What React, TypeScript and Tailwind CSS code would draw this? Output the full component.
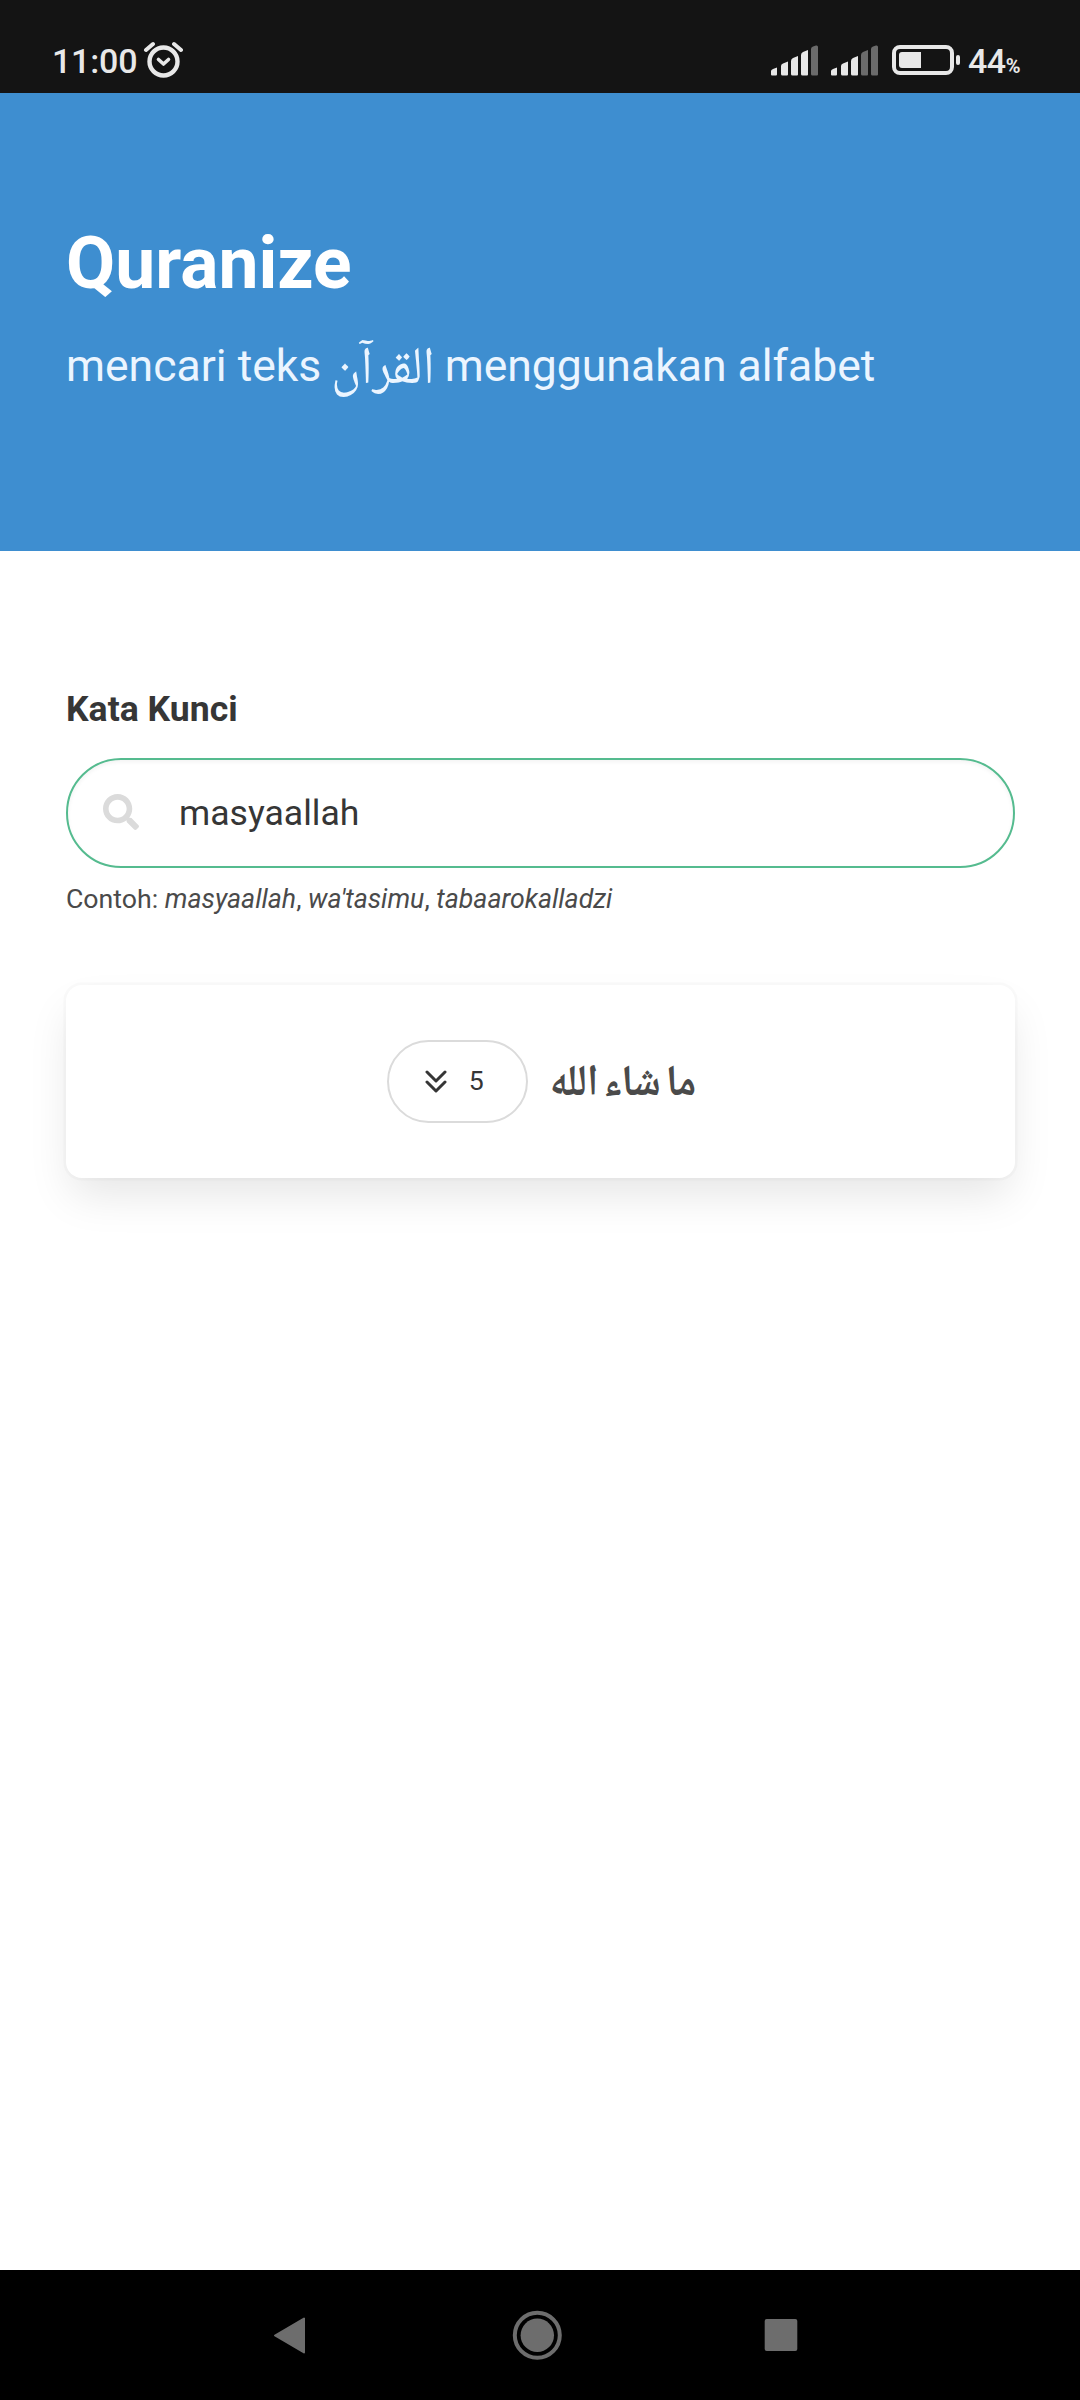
import React from "react";

const SIGNAL_BARS = [
  "M1 30.500 V26 Q1 25 3 24 L7 22.500 V29.500 Q7 30.500 6 30.500 H2 Q1 30.500 1 29.500Z",
  "M11 30 V21 Q11 19 13 18.500 L18 16.500 V29.500 Q18 30.500 17 30.500 H12.500 Q11 30.500 11 29Z",
  "M21 29 V16 Q21 14 23 13 L28 11 V29.500 Q28 30.500 27 30.500 H22.500 Q21 30.500 21 29Z",
  "M31 29 V10 Q31 8 33 7 L38 5 V29.500 Q38 30.500 37 30.500 H32.500 Q31 30.500 31 29Z",
  "M41 29 V4 Q41 2 43 1.500 L46 0.500 Q48 0 48 2 V29.500 Q48 30.500 47 30.500 H42.500 Q41 30.500 41 29Z",
];

function Signal({ level }: { level: number }) {
  return (
    <svg className="block h-[31px] w-[48px] shrink-0" viewBox="0 0 48 31">
      {SIGNAL_BARS.map((d, i) => (
        <path key={d} d={d} fill={i < level ? "#e8e8e8" : "#6b6b6b"} />
      ))}
    </svg>
  );
}

function StatusBar() {
  return (
    <div className="flex h-[93px] items-start bg-[#141414] text-[#e8e8e8]">
      <span className="mt-[41px] ml-[52px] w-[91px] text-[34px] leading-[40px] font-medium tracking-[-0.2px] whitespace-nowrap">11:00</span>
      <svg className="mt-[41px] block h-[38px] w-[40px] shrink-0" viewBox="0 0 40 38" fill="none" stroke="#e8e8e8" strokeLinecap="round" strokeLinejoin="round">
        <circle cx="20.500" cy="20.500" r="14" strokeWidth="4.400" />
        <path d="M15.500 18.500 L20.500 23 L25.500 18.500" strokeWidth="3.600" />
        <path d="M3 9 L10 3 M38 9 L31 3" strokeWidth="4" />
      </svg>
      <div className="mt-[45px] ml-auto flex gap-[12px]">
        <Signal level={4} />
        <Signal level={3} />
      </div>
      <svg className="mt-[45px] ml-[14px] block h-[31px] w-[69px] shrink-0" viewBox="0 0 69 31">
        <rect x="2" y="2" width="58" height="26" rx="6" fill="none" stroke="#e8e8e8" strokeWidth="4" />
        <path d="M10 7 H29 V23 H10 Q7 23 7 20 V10 Q7 7 10 7Z" fill="#e8e8e8" />
        <rect x="64" y="10" width="4" height="10" rx="2" fill="#e8e8e8" />
      </svg>
      <div className="mt-[41px] mr-[58px] ml-[7px] flex w-[54px] items-baseline font-medium">
        <span className="text-[34px] leading-[40px] tracking-[-0.5px]">44</span>
        <span className="text-[20px] leading-[40px] font-bold">%</span>
      </div>
    </div>
  );
}

export default function App() {
  return (
    <div className="flex h-[2400px] w-[1080px] flex-col overflow-hidden bg-white font-['Roboto','Noto_Naskh_Arabic',sans-serif] text-[#4a4a4a]">
      <StatusBar />
      <header className="h-[458px] bg-[#3e8ed0] px-[66px] pt-[131px]">
        <h1 className="text-[71.4px] leading-[79px] font-bold text-white">Quranize</h1>
        <p className="mt-[30px] flex h-[66px] items-center text-[44.5px] leading-[66px] whitespace-pre text-[#ebf5ff]">
          <span>mencari teks </span>
          <span dir="rtl" className="mr-[-1px] mb-[3px] ml-[-1px] scale-y-105 text-[50px]">القرآن</span>
          <span> menggunakan alfabet</span>
        </p>
      </header>
      <main className="flex-1 pt-[132px] pr-[65px] pl-[66px]">
        <label className="block text-[35.6px] leading-[53px] font-bold text-[#363636]">Kata Kunci</label>
        <div className="mt-[22px] flex h-[110px] items-center rounded-full border-2 border-[#55bb8f] bg-white pl-[35px] shadow-[inset_0_2px_4px_rgba(10,10,10,0.05)]">
          <svg className="mt-[-2px] h-[36px] w-[36px]" viewBox="0 0 512 512" fill="#dbdbdb">
            <path d="M505 442.700L405.300 343c-4.500-4.500-10.600-7-17-7H372c27.600-35.300 44-79.700 44-128C416 93.100 322.900 0 208 0S0 93.100 0 208s93.100 208 208 208c48.300 0 92.700-16.400 128-44v16.300c0 6.400 2.500 12.500 7 17l99.700 99.700c9.400 9.400 24.600 9.400 33.900 0l28.300-28.300c9.400-9.400 9.400-24.600.1-34zM208 336c-70.700 0-128-57.200-128-128 0-70.700 57.200-128 128-128 70.700 0 128 57.200 128 128 0 70.700-57.200 128-128 128z" />
          </svg>
          <span className="ml-[40px] text-[35.6px] leading-[53px] text-[#363636]">masyaallah</span>
        </div>
        <p className="mt-[11px] text-[26.7px] leading-[40px]">
          Contoh: <i>masyaallah</i>, <i>wa'tasimu</i>, <i>tabaarokalladzi</i>
        </p>
        <section className="mt-[66px] flex h-[193px] items-center justify-center rounded-[16px] bg-white pl-[2px] shadow-[0_22px_44px_-5px_rgba(10,10,10,0.1),0_0_0_2.75px_rgba(10,10,10,0.02)]">
          <button className="mb-px flex h-[83px] w-[141px] items-center rounded-full border-2 border-[#dbdbdb] bg-white pl-[36px] text-[#363636]">
            <svg className="h-[24px] w-[22px]" viewBox="0 0 22 24" fill="none" stroke="#363636" strokeWidth="3" strokeLinecap="round" strokeLinejoin="round">
              <path d="M2 3 L11 12 L20 3 M2 13 L11 22 L20 13" />
            </svg>
            <span className="ml-[22px] text-[26.7px] leading-[40px]">5</span>
          </button>
          <span dir="rtl" className="mb-[3px] ml-[22px] scale-y-110 text-[40px] leading-[53px] font-bold [word-spacing:-5px] whitespace-nowrap">ما شاء الله</span>
        </section>
      </main>
      <nav className="h-[130px] bg-black">
        <svg className="block h-[130px] w-[1080px]" viewBox="0 0 1080 130" fill="#6d6d6d">
          <path d="M275 65.500 L304 48.500 V82.500Z" stroke="#6d6d6d" strokeWidth="2" strokeLinejoin="round" />
          <circle cx="537.300" cy="65.300" r="16.700" />
          <circle cx="537.300" cy="65.300" r="22.500" fill="none" stroke="#6d6d6d" strokeWidth="4" />
          <rect x="764.700" y="49" width="32.600" height="32" rx="2" />
        </svg>
      </nav>
    </div>
  );
}
